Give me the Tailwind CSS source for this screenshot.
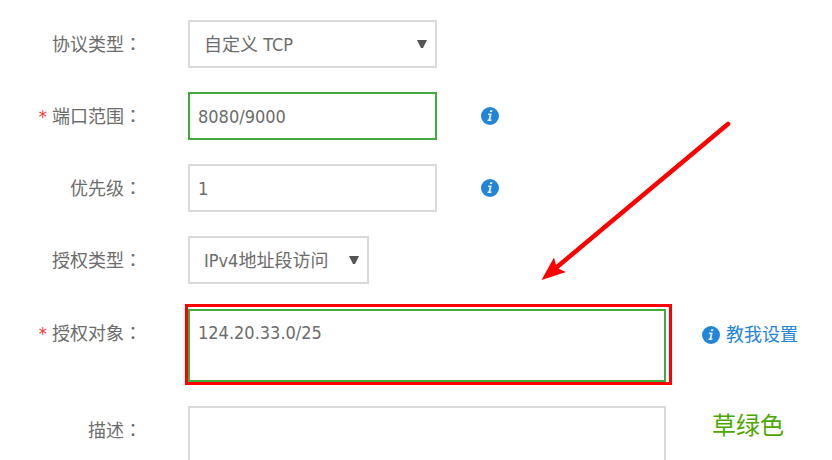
<!DOCTYPE html>
<html lang="zh-CN">
<head>
  <meta charset="UTF-8">
  <title>添加安全组规则</title>
  <meta name="viewport" content="width=device-width, initial-scale=1.0" />
  <script src="https://cdn.jsdelivr.net/npm/@tailwindcss/browser@4"></script>
</head>
<body class="bg-white min-h-screen overflow-hidden text-[#6c6c6c] text-lg leading-6 font-['DejaVu_Sans_Condensed','Noto_Sans_CJK_SC',sans-serif]">

  <form class="relative flex flex-col gap-6 pt-5 pr-8">
    <!-- Protocol -->
    <div class="flex items-start">
      <label for="protocol" class="w-[142px] pt-[11px] text-right shrink-0">协议类型<span lang="zh-TW" class="font-['Noto_Sans_CJK_TC',sans-serif]">：</span></label>
      <div class="relative ml-[46px]">
        <select id="protocol" class="appearance-none w-[249px] h-12 pt-0.5 pl-3.5 pr-10 bg-white border-2 border-[#d9d9d9]">
          <option>自定义 TCP</option>
        </select>
        <svg class="absolute right-2.5 top-5 w-2.5 h-2 pointer-events-none" viewBox="0 0 10 8"><path d="M0 0H10L6 8H4Z" fill="#555"/></svg>
      </div>
    </div>

    <!-- Port range -->
    <div class="flex items-start">
      <label for="port" class="w-[142px] pt-[11px] text-right shrink-0"><span class="text-[#f33]">* </span>端口范围<span lang="zh-TW" class="font-['Noto_Sans_CJK_TC',sans-serif]">：</span></label>
      <input id="port" type="text" value="8080/9000" class="ml-[46px] w-[249px] h-12 px-2 border-2 border-[#3fac3f]">
      <svg class="w-[18px] h-[18px] ml-11 mt-[15px]" viewBox="0 0 18 18"><circle cx="9" cy="9" r="9" fill="#2385da"/><path d="M9.2 3.2h2.3l-.4 1.9H8.8zM7.2 6.6h3.5l-1.2 6h1.1l-.3 1.4H6.4l.3-1.4h.9l.9-4.6H7z" fill="#e4f0fb"/></svg>
    </div>

    <!-- Priority -->
    <div class="flex items-start">
      <label for="priority" class="w-[142px] pt-[11px] text-right shrink-0">优先级<span lang="zh-TW" class="font-['Noto_Sans_CJK_TC',sans-serif]">：</span></label>
      <input id="priority" type="text" value="1" class="ml-[46px] w-[249px] h-12 px-2 border-2 border-[#d9d9d9]">
      <svg class="w-[18px] h-[18px] ml-11 mt-[15px]" viewBox="0 0 18 18"><circle cx="9" cy="9" r="9" fill="#2385da"/><path d="M9.2 3.2h2.3l-.4 1.9H8.8zM7.2 6.6h3.5l-1.2 6h1.1l-.3 1.4H6.4l.3-1.4h.9l.9-4.6H7z" fill="#e4f0fb"/></svg>
    </div>

    <!-- Authorization type -->
    <div class="flex items-start">
      <label for="authType" class="w-[142px] pt-[11px] text-right shrink-0">授权类型<span lang="zh-TW" class="font-['Noto_Sans_CJK_TC',sans-serif]">：</span></label>
      <div class="relative ml-[46px]">
        <select id="authType" class="appearance-none w-[181px] h-12 pt-0.5 pl-3.5 pr-8 bg-white border-2 border-[#d9d9d9]">
          <option>IPv4地址段访问</option>
        </select>
        <svg class="absolute right-2.5 top-5 w-2.5 h-2 pointer-events-none" viewBox="0 0 10 8"><path d="M0 0H10L6 8H4Z" fill="#555"/></svg>
      </div>
    </div>

    <!-- Authorization object -->
    <div class="flex items-start pt-px">
      <label for="authObject" class="w-[142px] pt-[11px] text-right shrink-0"><span class="text-[#f33]">* </span>授权对象<span lang="zh-TW" class="font-['Noto_Sans_CJK_TC',sans-serif]">：</span></label>
      <div class="relative ml-[46px] flex">
        <textarea id="authObject" class="w-[478px] h-[73px] px-2 pt-2.5 resize-none border-2 border-[#3fac3f]">124.20.33.0/25</textarea>
        <div class="absolute -left-[3px] -right-1.5 -top-[5px] -bottom-[3px] border-3 border-[#f00] pointer-events-none"></div>
      </div>
      <a href="#" class="ml-9 pt-3.5 flex items-center gap-1.5 whitespace-nowrap text-[#2385da]">
        <svg class="w-[18px] h-[18px]" viewBox="0 0 18 18"><circle cx="9" cy="9" r="9" fill="#2385da"/><path d="M9.2 3.2h2.3l-.4 1.9H8.8zM7.2 6.6h3.5l-1.2 6h1.1l-.3 1.4H6.4l.3-1.4h.9l.9-4.6H7z" fill="#e4f0fb"/></svg>
        教我设置
      </a>
    </div>

    <!-- Description -->
    <div class="flex items-start">
      <label for="desc" class="w-[142px] pt-[11px] text-right shrink-0">描述<span lang="zh-TW" class="font-['Noto_Sans_CJK_TC',sans-serif]">：</span></label>
      <textarea id="desc" class="ml-[46px] w-[478px] h-[73px] px-2 pt-2.5 resize-none border-2 border-[#d9d9d9]"></textarea>
      <span class="ml-[46px] pt-1 text-2xl text-[#4ca800]">草绿色</span>
    </div>

    <!-- Arrow -->
    <svg class="absolute left-[540px] top-[120px] w-[192px] h-[162px] pointer-events-none" viewBox="540 120 192 162">
      <path d="M728 124L557 267" stroke="#f00" stroke-width="4.5" stroke-linecap="round"/>
      <path d="M541.500 280L554 257.500L556 265L559 269L566 272Z" fill="#f00"/>
    </svg>
  </form>

</body>
</html>
